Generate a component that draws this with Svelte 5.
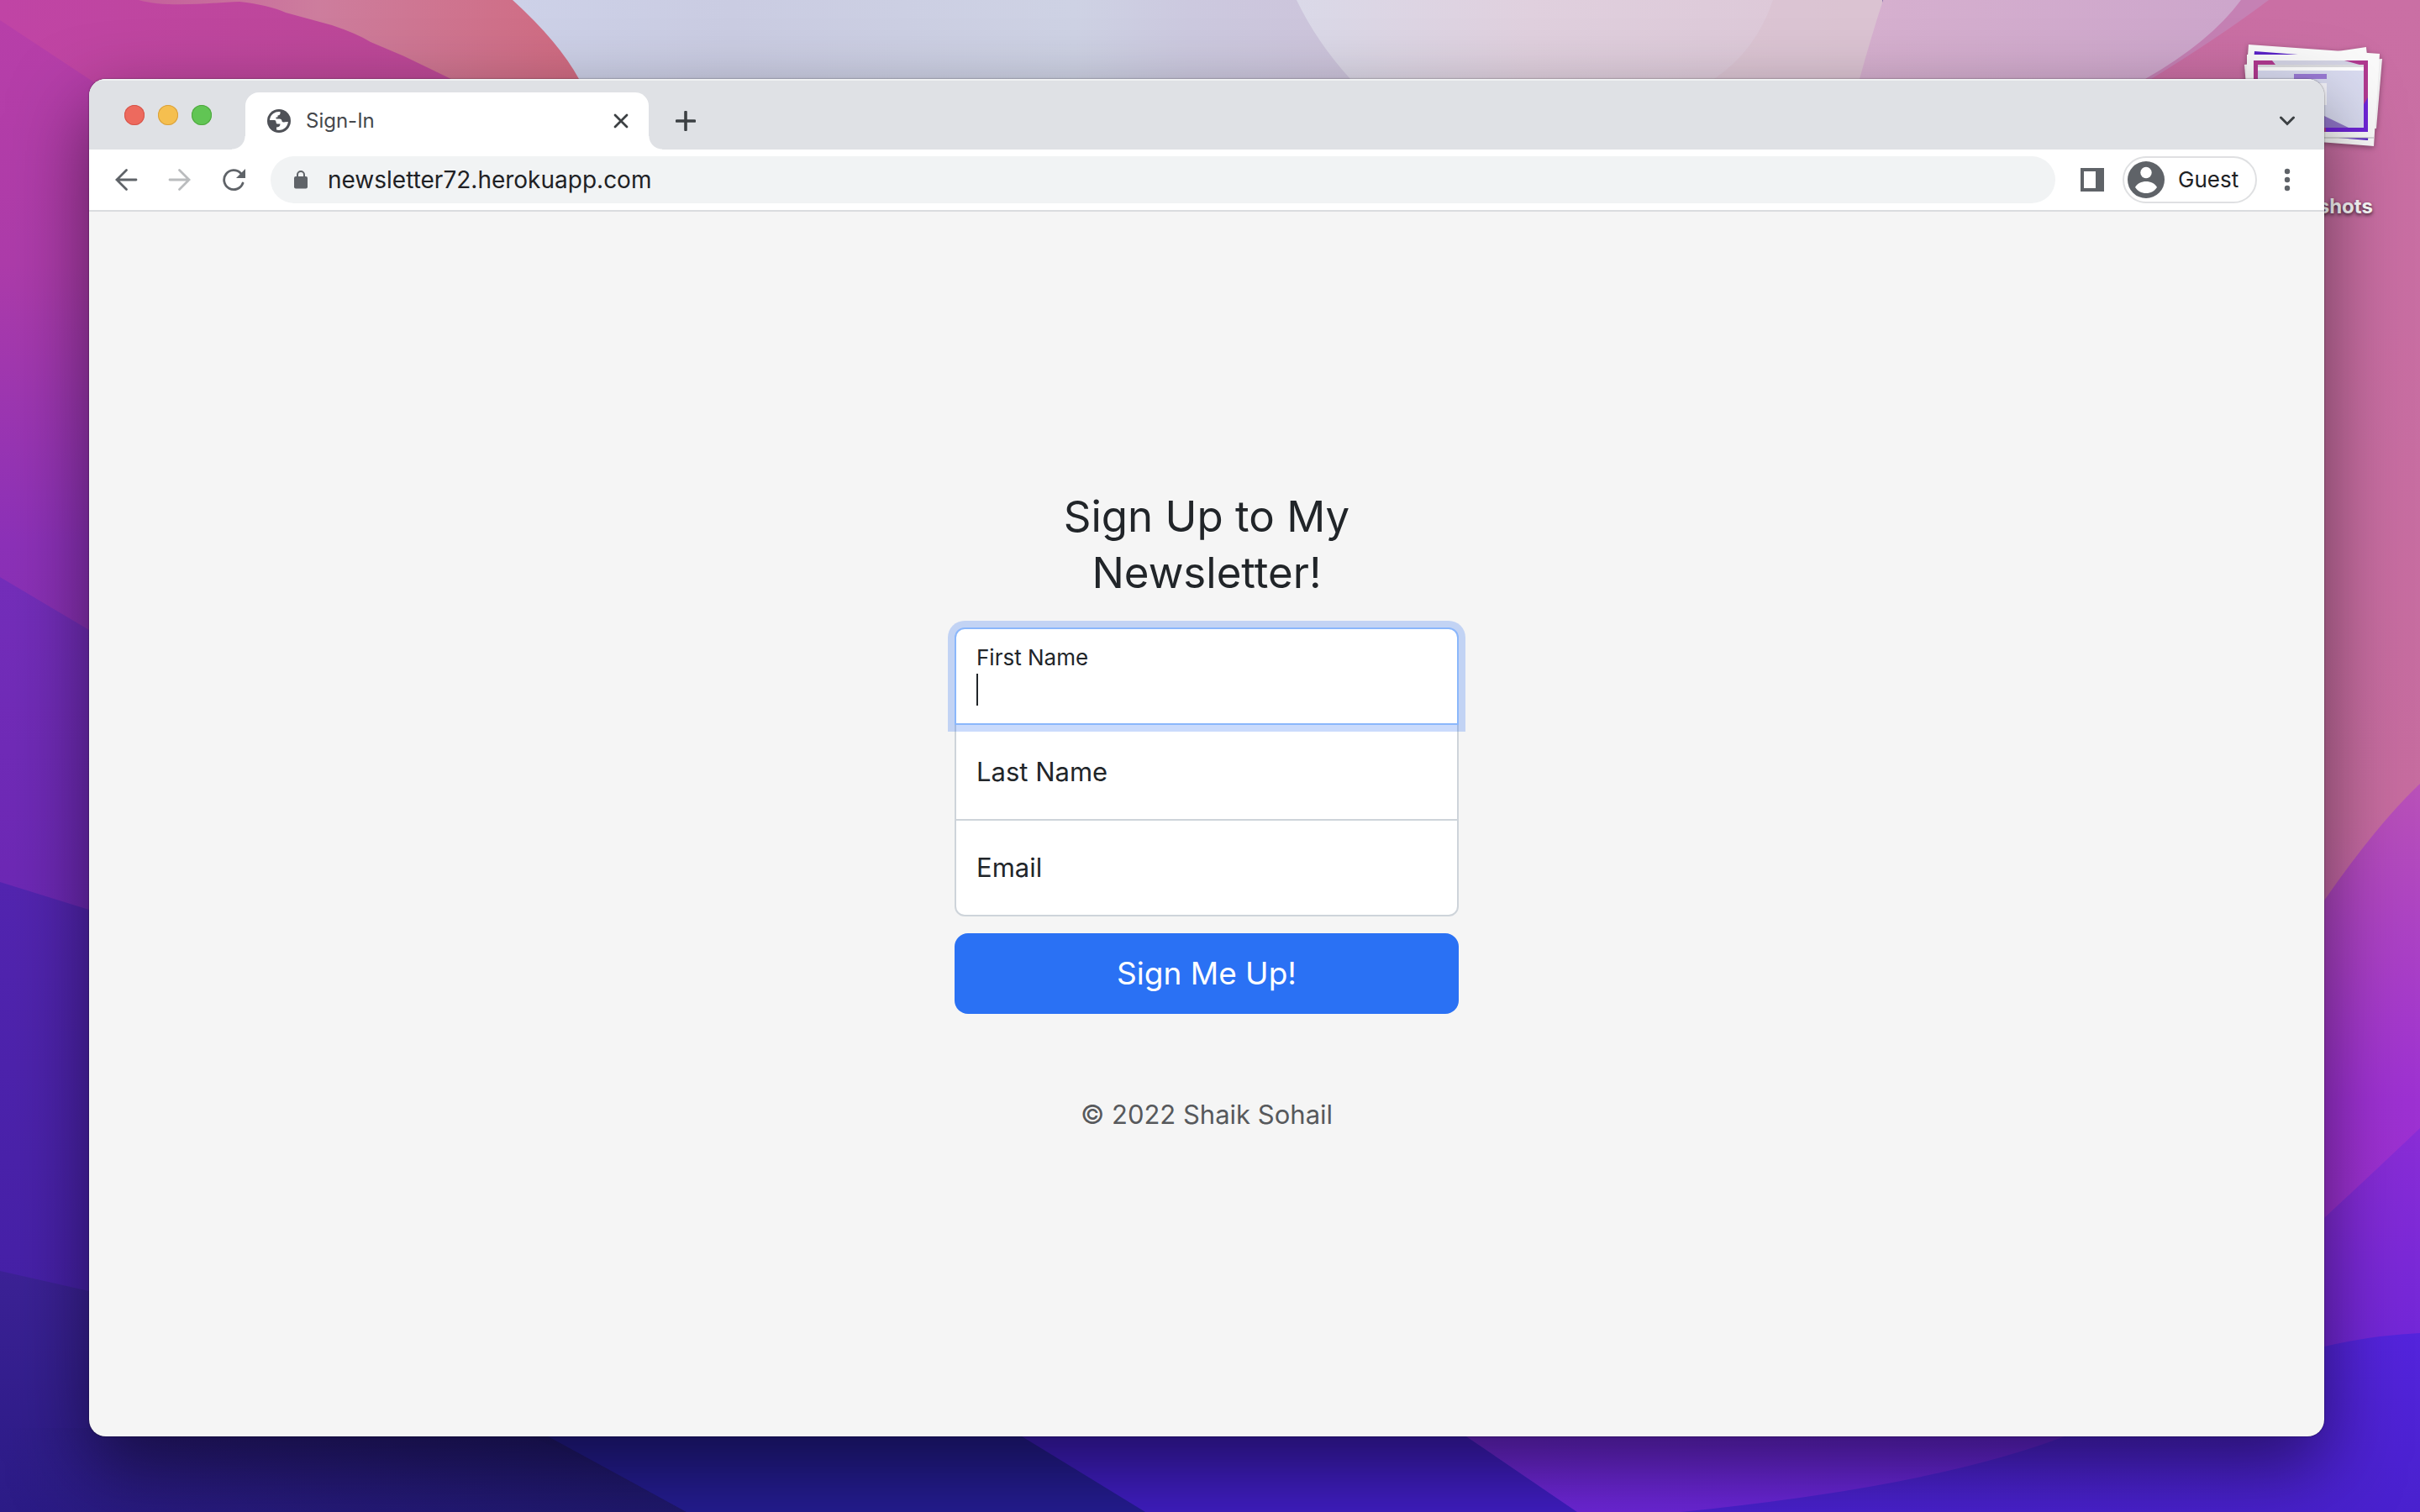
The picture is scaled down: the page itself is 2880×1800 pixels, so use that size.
<script>
  let firstName = $state('');
  let lastName = $state('');
  let email = $state('');
  let address = $state('newsletter72.herokuapp.com');
</script>

<div class="desktop">
  <svg class="wallpaper" viewBox="0 0 2880 1800" preserveAspectRatio="none" aria-hidden="true">
    <defs>
      <linearGradient id="w-left" x1="0" y1="0" x2="0" y2="1"><stop offset="0" stop-color="#b83fa8" /><stop offset=".35" stop-color="#ad3caa" /><stop offset=".72" stop-color="#8c31b8" /><stop offset="1" stop-color="#842fae" /></linearGradient>
      <linearGradient id="w-top" x1="0" y1="0" x2="1" y2="0"><stop offset="0" stop-color="#c044a5" /><stop offset="1" stop-color="#bb4a90" /></linearGradient>
      <linearGradient id="w-salmon" x1="0" y1="0" x2="1" y2="0"><stop offset="0" stop-color="#c4609c" /><stop offset=".4" stop-color="#cd7d9d" /><stop offset="1" stop-color="#d06a80" /></linearGradient>
      <linearGradient id="w-blue" x1="0" y1="0" x2="1" y2="0"><stop offset="0" stop-color="#cdd1e8" /><stop offset=".25" stop-color="#cacce2" /><stop offset=".65" stop-color="#ced2e4" /><stop offset=".78" stop-color="#ccc9df" /><stop offset="1" stop-color="#cdc3da" /></linearGradient>
      <linearGradient id="w-mist" x1="0" y1="0" x2="1" y2="0"><stop offset="0" stop-color="#dad9e8" /><stop offset=".4" stop-color="#e0d0de" /><stop offset="1" stop-color="#dcc6d6" /></linearGradient>
      <linearGradient id="w-lilac" x1="0" y1="0" x2="1" y2="0"><stop offset="0" stop-color="#d6b0cf" /><stop offset="1" stop-color="#cca5cb" /></linearGradient>
      <linearGradient id="w-violet" x1="0" y1="0" x2="0" y2="1"><stop offset="0" stop-color="#742eba" /><stop offset="1" stop-color="#6c28b4" /></linearGradient>
      <linearGradient id="w-indigo" x1="0" y1="0" x2="0" y2="1"><stop offset="0" stop-color="#5325b0" /><stop offset="1" stop-color="#4420a6" /></linearGradient>
      <linearGradient id="w-navy" x1="0" y1="0" x2="0" y2="1"><stop offset="0" stop-color="#3c2296" /><stop offset="1" stop-color="#2b1b86" /></linearGradient>
      <linearGradient id="w-dusk" x1="0" y1="0" x2="1" y2="0"><stop offset="0" stop-color="#1f186c" stop-opacity="0" /><stop offset="1" stop-color="#1f186c" /></linearGradient>
      <linearGradient id="w-pink" x1="0" y1="0" x2="0" y2="1"><stop offset="0" stop-color="#ca6fa4" /><stop offset=".8" stop-color="#c66c9f" /><stop offset="1" stop-color="#c45fb0" /></linearGradient>
      <linearGradient id="w-orchid" x1="0" y1="0" x2="0" y2="1"><stop offset="0" stop-color="#b951b8" /><stop offset=".6" stop-color="#9d31d2" /><stop offset="1" stop-color="#982fd0" /></linearGradient>
      <linearGradient id="w-purple" x1="0" y1="0" x2="0" y2="1"><stop offset="0" stop-color="#8a2dd6" /><stop offset="1" stop-color="#6c25d8" /></linearGradient>
      <linearGradient id="w-royal" x1="0" y1="0" x2="0" y2="1"><stop offset="0" stop-color="#5424dc" /><stop offset="1" stop-color="#4921ce" /></linearGradient>
      <linearGradient id="w-arc" x1="0" y1="0" x2="1" y2="0"><stop offset="0" stop-color="#7027d8" /><stop offset="1" stop-color="#6424d6" /></linearGradient>
    </defs>
    <rect width="2880" height="1800" fill="#2b1b7c" />
    <path d="M0 0H800V900H0Z" fill="url(#w-left)" />
    <path d="M0 0H720V120H146L106 94L0 24Z" fill="url(#w-top)" />
    <path d="M165 0C200 10 250 3 285 2Q320 6 340 15L395 30Q425 40 441 50L481 67L545 98H700V0Z" fill="url(#w-salmon)" />
    <path d="M610 0Q665 50 689 94V120H1640V0Z" fill="url(#w-blue)" />
    <path d="M1543 0Q1567 50 1607 94V120H2240V0Z" fill="url(#w-mist)" />
    <path d="M2110 0Q2090 60 2040 94H2260V0Z" fill="#d9bfcd" opacity=".5" />
    <path d="M2241 0Q2225 50 2213 94V120H2700V0Z" fill="url(#w-lilac)" />
    <path d="M2667 0Q2630 50 2553 94V120H2880V0Z" fill="#c581b4" />
    <path d="M2700 0Q2640 45 2560 94V1200H2880V0Z" fill="url(#w-pink)" />
    <path d="M0 687L106 750L400 900V1100H0Z" fill="url(#w-violet)" />
    <path d="M0 1050L106 1083L400 1200V1600H0Z" fill="url(#w-indigo)" />
    <path d="M0 1513L106 1537Q500 1630 817 1800H0Z" fill="url(#w-navy)" />
    <path d="M0 1700H640L817 1800H0Z" fill="url(#w-dusk)" />
    <path d="M652 1710L817 1800H1400V1600H500Z" fill="#241c90" />
    <path d="M1216 1710L1363 1800H1900V1600H1040Z" fill="#3f1dc0" />
    <path d="M2560 1190L2766 1072Q2830 980 2880 933V1560H2560Z" fill="url(#w-orchid)" />
    <path d="M2560 1520L2766 1450Q2820 1400 2880 1343V1660H2560Z" fill="url(#w-purple)" />
    <path d="M1600 1620H2660L2766 1603Q2820 1590 2880 1587V1800H1877L1745 1710Z" fill="url(#w-royal)" />
    <path d="M1745 1710L1877 1800H2000Q2300 1770 2457 1710V1640H1700Z" fill="url(#w-arc)" />
  </svg>

  <div class="stack">
    <svg viewBox="-4 0 172 130" width="172" height="130" aria-hidden="true">
      <path d="M20 30L167 20L160 103L30 100Z" fill="#f0eff0" />
      <path d="M3 27L148 7L152 40L8 90Z" fill="#f3f2f3" />
      <path d="M8 3L164 14L157 124L0 112Z" fill="#fafafa" />
      <path d="M15 11L157 22L150 117L8 105Z" fill="#5a23c8" />
      <path d="M100 13L148 6V20H70Z" fill="#fafafa" />
      <path d="M6 15H157V114H6Z" fill="#fafafa" />
      <path d="M6 114H157" stroke="#b9b9bb" stroke-width="1" />
      <path d="M14 22H150V107H14Z" fill="#b0398f" />
      <path d="M36 22H122L140 27H40Z" fill="#d3d3e4" />
      <path d="M144 76L150 66V107H100V102H144Z" fill="#6f25d6" />
      <path d="M19 27H145V102H19Z" fill="#dadcf1" />
      <path d="M19 27H145V30H19Z" fill="#dcdcdf" />
      <path d="M19 30H145V34H19Z" fill="#fff" />
      <path d="M62 38H101V44H62Z" fill="#9b7bd6" />
      <path d="M62 49H101V75H62Z" fill="#f6f5fb" />
      <path d="M98 88L127 102H80V88Z" fill="#9176c9" />
    </svg>
    <span>Screenshots</span>
  </div>

  <div class="window">
    <header class="tabstrip">
      <div class="lights">
        <button class="light red" aria-label="Close window"></button>
        <button class="light amber" aria-label="Minimise window"></button>
        <button class="light green" aria-label="Zoom window"></button>
      </div>
      <div class="tab">
        <svg width="28" height="28" viewBox="0 0 28 28" aria-hidden="true">
          <circle cx="14" cy="14" r="14" fill="#4f5157" />
          <path d="M3 13A11 11 0 0 1 15.500 3.100V5.500Q15 7.500 12.500 7.500V9.500H10.500V11.500H14.500Q17.500 11.500 17.500 14.500Q18.500 15.800 21 15.200L24.900 15A11 11 0 0 1 11 24.600V21.500Q15.500 21.500 15.500 17.500H12Q10.500 17.500 10.500 15Q10.500 13 8.500 13Z" fill="#fff" />
        </svg>
        <span class="title">Sign-In</span>
        <button class="icon" aria-label="Close tab">
          <svg width="18" height="18" viewBox="0 0 18 18"><path d="M2 2L16 16M16 2L2 16" stroke="#3c4043" stroke-width="2.800" stroke-linecap="round" /></svg>
        </button>
      </div>
      <button class="icon add" aria-label="New tab">
        <svg width="24" height="24" viewBox="0 0 24 24"><path d="M12 1.500V22.500M1.500 12H22.500" stroke="#3c4043" stroke-width="3.600" stroke-linecap="round" /></svg>
      </button>
      <button class="icon search" aria-label="Search tabs">
        <svg width="20" height="12" viewBox="0 0 20 12"><path d="M2.500 2L10 9.500L17.500 2" fill="none" stroke="#3c4043" stroke-width="3" stroke-linecap="round" /></svg>
      </button>
    </header>

    <nav class="toolbar" aria-label="Browser">
      <div class="nav">
        <button class="icon" aria-label="Back">
          <svg width="28" height="28" viewBox="0 0 28 28"><path d="M26 14H3M14.500 2.500L3 14L14.500 25.500" fill="none" stroke="#5f6368" stroke-width="2.800" stroke-linecap="round" /></svg>
        </button>
        <button class="icon" aria-label="Forward">
          <svg width="28" height="28" viewBox="0 0 28 28"><path d="M2 14H25M13.500 2.500L25 14L13.500 25.500" fill="none" stroke="#babcbe" stroke-width="2.800" stroke-linecap="round" /></svg>
        </button>
        <button class="icon" aria-label="Reload">
          <svg width="28" height="28" viewBox="0 0 28 28"><path d="M25 18A11.500 11.500 0 1 1 22.500 6.200" fill="none" stroke="#5f6368" stroke-width="2.800" stroke-linecap="round" /><path d="M28 1V12H17Z" fill="#5f6368" /></svg>
        </button>
      </div>
      <label class="omnibox">
        <svg width="16" height="22" viewBox="0 0 16 22" aria-hidden="true"><rect y="7" width="16" height="14.500" rx="2" fill="#5f6368" /><path d="M4 8V5A4 4 0 0 1 12 5V8" fill="none" stroke="#5f6368" stroke-width="2" /></svg>
        <input type="text" aria-label="Address" bind:value={address} />
      </label>
      <button class="icon" aria-label="Side panel">
        <svg width="28" height="28" viewBox="0 0 28 28"><path d="M0 0H28V28H0ZM4 4V24H18V4Z" fill="#5f6368" fill-rule="evenodd" /></svg>
      </button>
      <button class="profile">
        <svg width="44" height="44" viewBox="0 0 44 44" aria-hidden="true"><circle cx="22" cy="22" r="22" fill="#5f6368" /><circle cx="22" cy="13.500" r="6.700" fill="#fff" /><path d="M9 31C11 26.500 17 24 22 24S33 26.500 35 31C32 35.500 27.500 38 22 38S12 35.500 9 31Z" fill="#fff" /></svg>
        Guest
      </button>
      <button class="icon more" aria-label="Menu">
        <svg width="8" height="28" viewBox="0 0 8 28"><g fill="#5f6368"><circle cx="4" cy="4" r="3.200" /><circle cx="4" cy="14" r="3.200" /><circle cx="4" cy="24" r="3.200" /></g></svg>
      </button>
    </nav>

    <main>
      <form onsubmit={(e) => e.preventDefault()}>
        <h1>Sign Up to My Newsletter!</h1>
        <div class="fields">
          <div class="field active">
            <input id="first" type="text" bind:value={firstName} />
            <label for="first">First Name</label>
            <i class="caret"></i>
          </div>
          <div class="field">
            <input id="last" type="text" bind:value={lastName} />
            <label for="last">Last Name</label>
          </div>
          <div class="field">
            <input id="email" type="email" bind:value={email} />
            <label for="email">Email</label>
          </div>
        </div>
        <button class="submit" type="submit">Sign Me Up!</button>
        <p>© 2022 Shaik Sohail</p>
      </form>
    </main>
  </div>
</div>

<style>
  :global(body) {
    margin: 0;
  }
  .desktop {
    position: relative;
    box-sizing: border-box;
    display: flex;
    min-height: 100vh;
    padding: 94px 114px 90px 106px;
    overflow: hidden;
    font-family: Inter, 'Liberation Sans', sans-serif;
    color: #212529;
  }
  .desktop :global(svg) {
    display: block;
    flex: none;
  }
  .wallpaper {
    position: absolute;
    inset: 0;
    width: 100%;
    height: 100%;
  }
  .stack {
    position: absolute;
    top: 50px;
    right: 44px;
    display: flex;
    flex-direction: column;
    align-items: center;
    gap: 50px;
  }
  .stack svg {
    filter: drop-shadow(0 2px 3px rgba(0, 0, 0, 0.35));
  }
  .stack span {
    font-size: 24px;
    line-height: 32px;
    font-weight: 700;
    color: #fff;
    text-shadow: 0 2px 4px rgba(0, 0, 0, 0.7);
  }
  button,
  input {
    font: inherit;
    color: inherit;
    margin: 0;
    padding: 0;
    border: 0;
    background: none;
    outline: none;
  }
  .window {
    position: relative;
    flex: 1;
    display: flex;
    flex-direction: column;
    min-width: 0;
    border-radius: 20px;
    overflow: hidden;
    background: #f5f5f5;
    box-shadow:
      0 0 2px rgba(0, 0, 0, 0.6),
      0 36px 90px rgba(0, 0, 0, 0.5);
  }
  .tabstrip {
    display: flex;
    align-items: center;
    height: 68px;
    padding: 16px 34px 0 42px;
    background: #dfe1e5;
    box-shadow: inset 0 2px 0 #f0f1f3;
  }
  .lights {
    display: flex;
    gap: 16px;
    margin-right: 40px;
    padding-bottom: 14px;
  }
  .light {
    width: 24px;
    height: 24px;
    border-radius: 50%;
  }
  .red {
    background: #ed6a5e;
    box-shadow: inset 0 0 0 1px #d5544a;
  }
  .amber {
    background: #f5bf4f;
    box-shadow: inset 0 0 0 1px #d8a03d;
  }
  .green {
    background: #61c554;
    box-shadow: inset 0 0 0 1px #4fa73f;
  }
  .tab {
    position: relative;
    display: flex;
    align-items: center;
    box-sizing: border-box;
    width: 480px;
    height: 68px;
    padding: 0 24px 0 26px;
    border-radius: 16px 16px 0 0;
    background: #fff;
  }
  .tab::before,
  .tab::after {
    content: '';
    position: absolute;
    bottom: 0;
    width: 16px;
    height: 16px;
  }
  .tab::before {
    right: 100%;
    background: radial-gradient(circle at 0 0, transparent 15px, #fff 16px);
  }
  .tab::after {
    left: 100%;
    background: radial-gradient(circle at 100% 0, transparent 15px, #fff 16px);
  }
  .title {
    flex: 1;
    padding-left: 18px;
    font-size: 24px;
    line-height: 32px;
    color: #45484c;
  }
  .add {
    margin-left: 32px;
  }
  .search {
    margin-left: auto;
  }
  .toolbar {
    display: flex;
    align-items: center;
    height: 72px;
    padding: 0 40px 0 30px;
    background: #fff;
    border-bottom: 2px solid #dadcdf;
  }
  .nav {
    display: flex;
    gap: 36px;
    margin-right: 30px;
  }
  .omnibox {
    flex: 1;
    display: flex;
    align-items: center;
    gap: 24px;
    height: 56px;
    margin-right: 30px;
    padding: 0 28px;
    border-radius: 28px;
    background: #f1f3f4;
  }
  .omnibox input {
    flex: 1;
    min-width: 0;
    font-size: 28px;
    line-height: 36px;
    color: #202124;
  }
  .profile {
    display: flex;
    align-items: center;
    gap: 16px;
    box-sizing: border-box;
    width: 160px;
    height: 56px;
    margin: 0 32px 0 22px;
    padding-left: 4px;
    border: 2px solid #dfe0e2;
    border-radius: 28px;
    font-size: 26px;
    line-height: 32px;
    color: #202124;
  }
  main {
    flex: 1;
    display: flex;
    align-items: center;
    justify-content: center;
  }
  form {
    display: flex;
    flex-direction: column;
    width: 600px;
    padding-bottom: 30px;
  }
  h1 {
    margin: 0 100px 32px;
    font-size: 51px;
    line-height: 67px;
    font-weight: 400;
    text-align: center;
  }
  .field {
    display: grid;
    margin-bottom: -2px;
  }
  .field > * {
    grid-area: 1 / 1;
  }
  .field input {
    box-sizing: border-box;
    width: 100%;
    height: 116px;
    padding: 52px 24px 20px;
    border: 2px solid #ced4da;
    background: #fff;
    font-size: 31px;
  }
  .field label {
    align-self: center;
    justify-self: start;
    padding-left: 26px;
    font-size: 31px;
    line-height: 48px;
  }
  .field:first-child input {
    border-radius: 12px 12px 0 0;
  }
  .field:last-child input {
    border-radius: 0 0 12px 12px;
  }
  .field.active {
    position: relative;
    z-index: 1;
  }
  .field.active input {
    border-color: #8bb7fb;
    box-shadow: 0 0 0 8px rgba(42, 113, 244, 0.25);
    caret-color: transparent;
  }
  .field.active label {
    align-self: start;
    padding-top: 16px;
    font-size: 26px;
    line-height: 40px;
  }
  .caret {
    width: 2px;
    height: 38px;
    margin: 55px 0 0 26px;
    background: #212529;
  }
  .submit {
    height: 96px;
    margin-top: 22px;
    border-radius: 16px;
    background: #2a71f4;
    color: #fff;
    font-size: 37px;
    line-height: 60px;
  }
  p {
    margin: 96px 0 0;
    font-size: 31px;
    line-height: 48px;
    text-align: center;
    color: #57595c;
  }
</style>
